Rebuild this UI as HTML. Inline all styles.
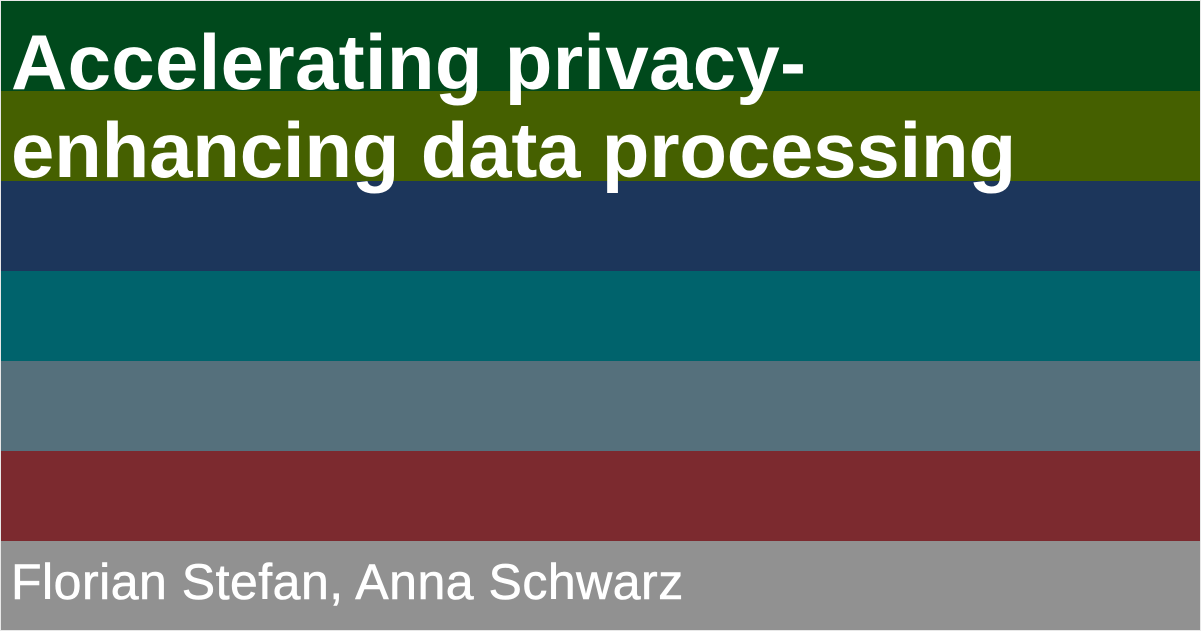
<!DOCTYPE html>
<html><head><style>
html,body{margin:0;padding:0}
body{width:1201px;height:631px;background:#e8e8e8;position:relative;overflow:hidden;font-family:"Liberation Sans",sans-serif}
.b{position:absolute;left:1px;width:1199px;height:90px}
.t{position:absolute;left:11px;color:#fff;font-weight:bold;font-size:78px;white-space:nowrap;line-height:1}
.a{position:absolute;left:11px;top:557px;color:#fff;font-size:50px;letter-spacing:0.5px;white-space:nowrap;line-height:1;-webkit-text-stroke:0.6px #fff}
</style></head><body>
<div class="b" style="top:1px;background:#00491c"></div>
<div class="b" style="top:91px;background:#456000"></div>
<div class="b" style="top:181px;background:#1c365b"></div>
<div class="b" style="top:271px;background:#00636c"></div>
<div class="b" style="top:361px;background:#55707c"></div>
<div class="b" style="top:451px;background:#7c2a2f"></div>
<div class="b" style="top:541px;height:89px;background:#919191"></div>
<div class="t" style="top:23px;letter-spacing:0.3px">Accelerating privacy-</div>
<div class="t" style="top:111px;letter-spacing:-0.2px">enhancing data processing</div>
<div class="a">Florian Stefan, Anna Schwarz</div>
</body></html>
